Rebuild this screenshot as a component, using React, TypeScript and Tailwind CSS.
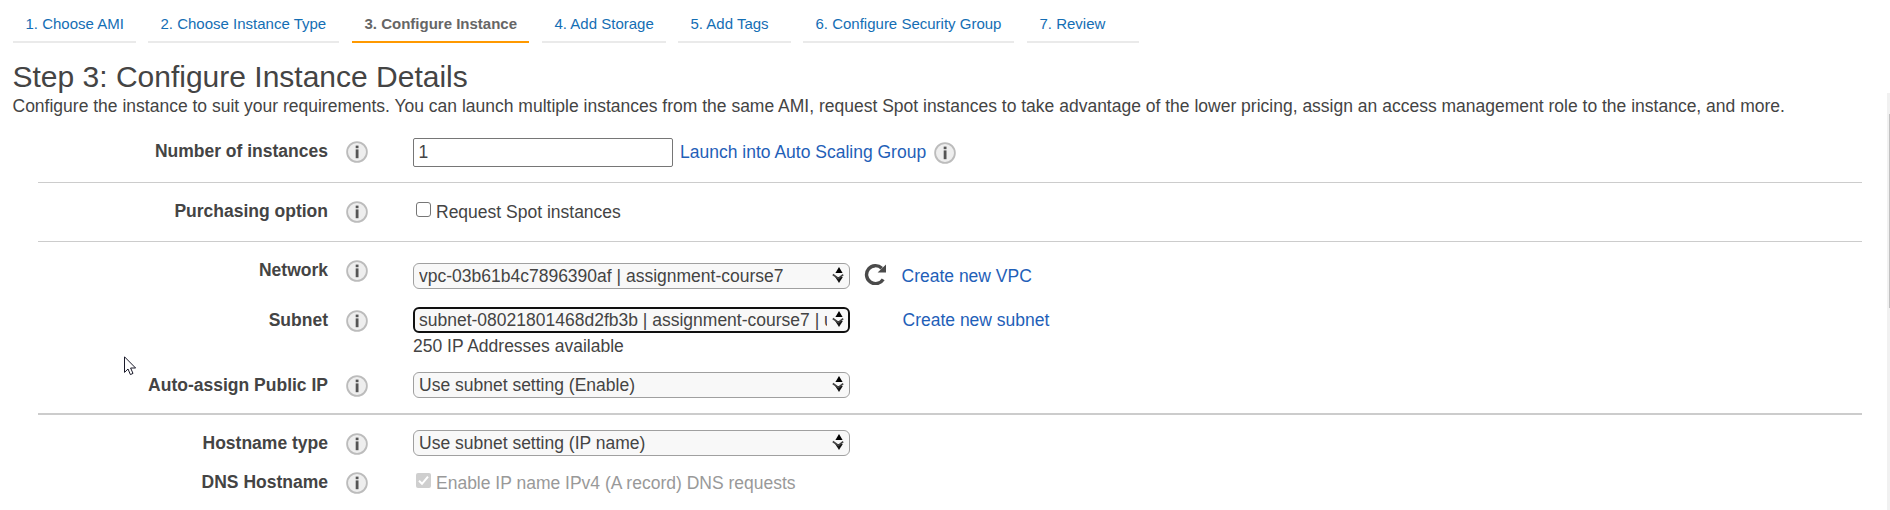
import type { ReactNode } from "react";

const steps = [
  { label: "1. Choose AMI", width: "ml-[13px] w-[123px]" },
  { label: "2. Choose Instance Type", width: "ml-[12px] w-[191px]" },
  { label: "3. Configure Instance", width: "ml-[13px] w-[177px]", active: true },
  { label: "4. Add Storage", width: "ml-[13px] w-[124px]" },
  { label: "5. Add Tags", width: "ml-[12px] w-[113px]" },
  { label: "6. Configure Security Group", width: "ml-[12px] w-[211px]" },
  { label: "7. Review", width: "ml-[13px] w-[112px]" },
];

function InfoIcon() {
  return (
    <svg className="block size-[22px] shrink-0" viewBox="0 0 22 22">
      <circle cx="11" cy="11" r="9.9" fill="#eeeeee" stroke="#bcbcbc" strokeWidth="1.8" />
      <rect x="9.7" y="4.6" width="2.8" height="2.6" fill="#555" />
      <rect x="9.7" y="8.4" width="2.8" height="8.8" fill="#555" />
    </svg>
  );
}

function SelectArrows() {
  return (
    <svg className="block h-[18px] w-[12px] shrink-0" viewBox="0 0 12 18">
      <path d="M7 0 L10.6 6 H3.4 Z" fill="#000" />
      <path d="M3.2 10 H10.8 L7 16 Z" fill="#111" />
      <path d="M4.2 7.6 L6.8 9.4 L9.4 7.6 Z" fill="#f8f8f8" />
      <path d="M0.8 7.6 L6.4 11.4 L11.2 7.6" fill="none" stroke="#444" strokeWidth="1.8" />
    </svg>
  );
}

function Select({ children, focused = false }: { children: ReactNode; focused?: boolean }) {
  return (
    <div
      className={
        focused
          ? "flex h-[26px] w-[437px] items-center rounded-[6px] border-2 border-[#101010] bg-[#f8f8f8] pr-[4px] pl-[4px]"
          : "flex h-[26px] w-[437px] items-center rounded-[6px] border border-[#a0a0a0] bg-[#f8f8f8] pr-[5px] pl-[5px]"
      }
    >
      <span className="mr-[5px] min-w-0 flex-1 overflow-hidden whitespace-nowrap">{children}</span>
      <SelectArrows />
    </div>
  );
}

function RefreshIcon() {
  return (
    <svg className="block size-[22px] shrink-0" viewBox="0 0 22 22">
      <path d="M19.2 16.4 A9 9 0 1 1 17.8 5.2" fill="none" stroke="#4a4a4a" strokeWidth="3.4" />
      <path d="M22 1.4 V9.4 H13.6 Z" fill="#4a4a4a" />
    </svg>
  );
}

function Row({
  label,
  className,
  controlClass,
  children,
}: {
  label: string;
  className: string;
  controlClass: string;
  children: ReactNode;
}) {
  return (
    <div className={`flex items-start ${className}`}>
      <div className="w-[290px] shrink-0 text-right font-bold">{label}</div>
      <div className="ml-[18px] shrink-0 pt-[1px]">
        <InfoIcon />
      </div>
      <div className={`ml-[45px] ${controlClass}`}>{children}</div>
    </div>
  );
}

export default function App() {
  return (
    <div className="flex h-[510px] w-[1890px] flex-col overflow-hidden bg-white font-['Liberation_Sans',Arial,sans-serif] text-[17.5px] leading-[22px] text-[#444]">
      <nav className="flex text-[15px]">
        {steps.map((s) => (
          <a
            key={s.label}
            className={`h-[43px] shrink-0 border-b-2 pt-[13px] pl-[12.5px] whitespace-nowrap ${s.width} ${
              s.active ? "border-[#f90] font-bold text-[#666]" : "border-[#eaeaea] text-[#146eb4]"
            }`}
          >
            {s.label}
          </a>
        ))}
      </nav>
      <div className="flex min-h-0 flex-1">
        <main className="relative w-[1887px] shrink-0">
          <h1 className="pt-[16px] pl-[12.5px] text-[30px] leading-[36px] whitespace-nowrap">
            Step 3: Configure Instance Details
          </h1>
          <p className="pl-[12.5px] whitespace-nowrap">
            Configure the instance to suit your requirements. You can launch multiple instances from the same AMI,
            request Spot instances to take advantage of the lower pricing, assign an access management role to the
            instance, and more.
          </p>
          <form className="mr-[25px] ml-[38px]">
            <section className="h-[66px] border-b border-[#ccc] pt-[23px]">
              <Row label="Number of instances" className="" controlClass="-mt-[2px] flex items-start">
                <div className="h-[29px] w-[260px] rounded-[2px] border border-[#767676] pt-[2px] pl-[4.5px]">1</div>
                <a className="ml-[7px] pt-[3px] text-[#1f60b8]">Launch into Auto Scaling Group</a>
                <span className="ml-[8px] pt-[4px]">
                  <InfoIcon />
                </span>
              </Row>
            </section>
            <section className="h-[59px] border-b border-[#ccc] pt-[17px]">
              <Row label="Purchasing option" className="" controlClass="flex items-start">
                <span className="mt-[2px] ml-[3px] size-[15px] rounded-[3px] border border-[#767676]" />
                <span className="ml-[5px] pt-[1px]">Request Spot instances</span>
              </Row>
            </section>
            <section className="h-[173px] border-b-2 border-[#ccc] pt-[17px]">
              <Row label="Network" className="h-[50px]" controlClass="flex items-start pt-[4px]">
                <Select>vpc-03b61b4c7896390af | assignment-course7</Select>
                <span className="ml-[14px]">
                  <RefreshIcon />
                </span>
                <a className="ml-[15.5px] pt-[2px] text-[#1f60b8]">Create new VPC</a>
              </Row>
              <Row label="Subnet" className="h-[65px]" controlClass="-mt-[2px] flex items-start">
                <div>
                  <Select focused>subnet-08021801468d2fb3b | assignment-course7 | us-east-1a</Select>
                  <div className="pt-[2px]">250 IP Addresses available</div>
                </div>
                <a className="ml-[52.5px] pt-[2px] text-[#1f60b8]">Create new subnet</a>
              </Row>
              <Row label="Auto-assign Public IP" className="" controlClass="-mt-[2px]">
                <Select>Use subnet setting (Enable)</Select>
              </Row>
            </section>
            <section className="pt-[17px]">
              <Row label="Hostname type" className="h-[39px]" controlClass="-mt-[2px]">
                <Select>Use subnet setting (IP name)</Select>
              </Row>
              <Row label="DNS Hostname" className="" controlClass="flex items-start text-[#999]">
                <svg className="mt-[2px] ml-[3px] block size-[15px]" viewBox="0 0 15 15">
                  <rect width="15" height="15" rx="2" fill="#cfcfcf" />
                  <path d="M3 7.8 L6 10.8 L12 3.6" fill="none" stroke="#fff" strokeWidth="2" />
                </svg>
                <span className="ml-[5px] pt-[1px]">Enable IP name IPv4 (A record) DNS requests</span>
              </Row>
            </section>
          </form>
          <svg className="absolute top-[313px] left-[124px] h-[20px] w-[13px]" viewBox="0 0 13 20">
            <path
              d="M0.5 0.8 V16.4 L4 13 L6.4 18.6 L9 17.4 L6.6 12 H11.6 Z"
              fill="#fff"
              stroke="#1a1a2a"
              strokeWidth="1"
            />
          </svg>
        </main>
        <div className="mt-[50px] flex w-[3px] justify-end bg-[#f1f1f1]">
          <div className="mt-[21px] h-[194px] w-px bg-[#c1c1c1]" />
        </div>
      </div>
    </div>
  );
}
